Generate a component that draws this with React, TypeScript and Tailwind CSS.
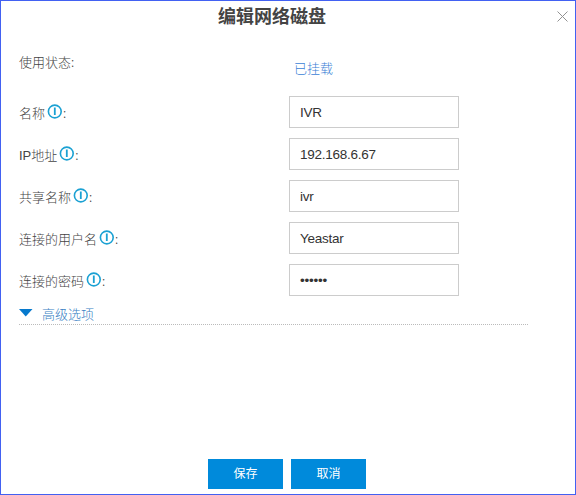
const fields = [
  { label: '名称', value: 'IVR' },
  { label: 'IP地址', value: '192.168.6.67' },
  { label: '共享名称', value: 'ivr' },
  { label: '连接的用户名', value: 'Yeastar' },
  { label: '连接的密码', value: '••••••' },
];

function InfoIcon() {
  return (
    <svg className="mr-[1px] ml-[2px] -mt-[5px] h-[15px] w-[15px] shrink-0" viewBox="0 0 15 15" fill="none">
      <circle cx="7.8" cy="7.5" r="6.4" stroke="#1ba1d3" strokeWidth="1.6" />
      <path d="M7.8 3.6v1.3M7.8 5.1v5.9" stroke="#1ba1d3" strokeWidth="1.8" />
    </svg>
  );
}

function Colon() {
  return <span className="font-['Noto_Sans_CJK_SC',sans-serif] font-light">:</span>;
}

export default function App() {
  return (
    <div className="flex h-[495px] w-[576px] flex-col border border-[#4261f2] bg-white font-['Liberation_Sans','Noto_Sans_CJK_SC',sans-serif] text-[13px] text-[#444]">
      <header className="flex h-[31px] items-start justify-between pr-[7px]">
        <span className="w-3" />
        <h1 className="-ml-[26px] pt-px text-[18px] leading-[30px] font-bold text-[#444]">编辑网络磁盘</h1>
        <button aria-label="close" className="mt-[10px]">
          <svg className="h-[11px] w-[11px]" viewBox="0 0 11 11" stroke="#929292" strokeWidth="1">
            <path d="M.5 .5l10 10M10.5 .5l-10 10" />
          </svg>
        </button>
      </header>
      <main className="flex-1 pl-[18px]">
        <div className="flex h-16 items-start">
          <span className="w-[275px] pt-5 leading-5 font-light">使用状态<Colon /></span>
          <span className="pt-[27px] leading-5 font-light text-[#3b7fd6]">已挂载</span>
        </div>
        <div className="flex flex-col gap-[10px]">
          {fields.map((f) => (
            <div key={f.label} className="flex h-8 items-center">
              <div className="flex w-[270px] items-center pt-1 leading-5 font-light">
                <span>{f.label}</span>
                <InfoIcon />
                <span className="-mt-[2px]"><Colon /></span>
              </div>
              <div className="flex h-8 w-[170px] items-center border border-[#ccc] pt-[2px] pl-[10px] text-[13.5px] tracking-[-0.25px] text-[#333]">
                {f.value}
              </div>
            </div>
          ))}
        </div>
        <div className="mt-[8px] flex h-[21px] w-[509px] items-center border-b border-dotted border-[#bbb]">
          <svg className="mt-[-2px] h-[8px] w-[14px]" viewBox="0 0 14 8">
            <path d="M0 0h13.5L6.75 7.5z" fill="#0679cd" />
          </svg>
          <span className="ml-[9px] pt-[2px] leading-5 font-light text-[#3b7fc4]">高级选项</span>
        </div>
      </main>
      <footer className="flex h-[35px] items-start gap-2 pl-[207px] text-[12px] text-white">
        <button className="h-[30px] w-[75px] bg-[#008adb]">保存</button>
        <button className="h-[30px] w-[75px] bg-[#008adb]">取消</button>
      </footer>
    </div>
  );
}
